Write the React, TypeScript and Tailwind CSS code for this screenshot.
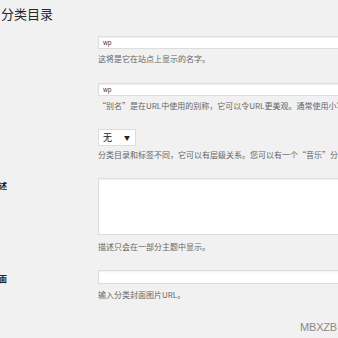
import React from "react";

const help = "text-[8px] leading-[10px] text-[#666] whitespace-nowrap";

export default function App() {
  return (
    <div className="w-[338px] h-[338px] bg-[#f1f1f1] overflow-hidden relative font-['Noto_Sans_CJK_SC',sans-serif]">
      <h1 className="text-[13px] leading-[13px] pt-[7px] pl-[1px] text-[#23282d] font-normal whitespace-nowrap">分类目录</h1>

      {/* 名称 */}
      <div className="flex mt-[16px]">
        <div className="w-[98px] shrink-0" />
        <div className="flex flex-col">
          <div className="h-[13px] w-[260px] bg-white border border-[#ddd] shadow-[inset_0_1px_2px_rgba(0,0,0,0.07)] pl-[4px] text-[6px] leading-[11px] text-[#333]">wp</div>
          <div className={help + " mt-[5px]"}>这将是它在站点上显示的名字。</div>
        </div>
      </div>

      {/* 别名 */}
      <div className="flex mt-[19px]">
        <div className="w-[98px] shrink-0" />
        <div className="flex flex-col">
          <div className="h-[13px] w-[260px] bg-white border border-[#ddd] shadow-[inset_0_1px_2px_rgba(0,0,0,0.07)] pl-[4px] text-[6px] leading-[11px] text-[#333]">wp</div>
          <div className={help + " mt-[5px]"}>“别名”是在URL中使用的别称，它可以令URL更美观。通常使用小写字母，只能包含字母，数字和连字符（-）。</div>
        </div>
      </div>

      {/* 父级 */}
      <div className="flex mt-[18px]">
        <div className="w-[98px] shrink-0" />
        <div className="flex flex-col">
          <div className="h-[17px] w-[38px] bg-white border border-[#ddd] flex items-center justify-between pl-[4px] pr-[5px] text-[9px] text-[#222]">
            <span>无</span>
            <span className="text-[6px]">▼</span>
          </div>
          <div className={help + " mt-[4px]"}>分类目录和标签不同，它可以有层级关系。您可以有一个“音乐”分类目录，在这个目录下可以有叫做“流行”和“古典”的子目录。</div>
        </div>
      </div>

      {/* 描述 */}
      <div className="flex mt-[18px]">
        <div className="w-[98px] shrink-0 pt-[3px]">
          <div className="ml-[-9px] text-[8px] leading-[10px] font-bold text-[#222]">描述</div>
        </div>
        <div className="flex flex-col">
          <div className="h-[57px] w-[260px] bg-white border border-[#ddd] shadow-[inset_0_1px_2px_rgba(0,0,0,0.07)]" />
          <div className={help + " mt-[7px]"}>描述只会在一部分主题中显示。</div>
        </div>
      </div>

      {/* 封面 */}
      <div className="flex mt-[18px]">
        <div className="w-[98px] shrink-0 pt-[4px]">
          <div className="ml-[-9px] text-[8px] leading-[10px] font-bold text-[#222]">封面</div>
        </div>
        <div className="flex flex-col">
          <div className="h-[14px] w-[260px] bg-white border border-[#ddd] shadow-[inset_0_1px_2px_rgba(0,0,0,0.07)]" />
          <div className={help + " mt-[6px]"}>输入分类封面图片URL。</div>
        </div>
      </div>

      <div className="absolute right-[1px] top-[321px] text-[11px] leading-[12px] text-[#8a8a8a] font-['Liberation_Sans',sans-serif] tracking-[-0.2px]">MBXZB</div>
    </div>
  );
}
